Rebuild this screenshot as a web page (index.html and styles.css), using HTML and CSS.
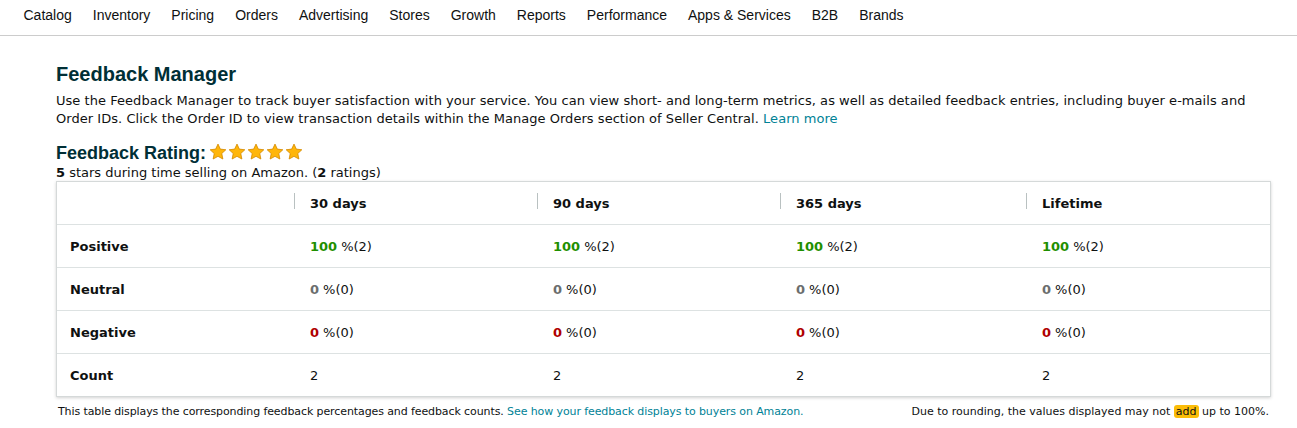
FILE: index.html
```html
<!DOCTYPE html>
<html lang="en">
<head>
<meta charset="utf-8">
<title>Feedback Manager</title>
<link rel="stylesheet" href="styles.css">
</head>
<body>
<nav class="topnav">
  <a>Catalog</a><a>Inventory</a><a>Pricing</a><a>Orders</a><a>Advertising</a><a>Stores</a><a>Growth</a><a>Reports</a><a>Performance</a><a>Apps &amp; Services</a><a>B2B</a><a>Brands</a>
</nav>
<main class="content">
  <h1 class="title">Feedback Manager</h1>
  <p class="intro">Use the Feedback Manager to track buyer satisfaction with your service. You can view short- and long-term metrics, as well as detailed feedback entries, including buyer e-mails and Order IDs. Click the Order ID to view transaction details within the Manage Orders section of Seller Central. <a class="link">Learn more</a></p>
  <div class="rating">
    <h2 class="rating-title">Feedback Rating:</h2>
    <span class="stars">
      <svg class="star" viewBox="0 0 20 20"><path d="M10 1.2l2.6 5.6 6.1.7-4.5 4.2 1.2 6.1L10 14.8l-5.4 3 1.2-6.1L1.3 7.5l6.1-.7z"/></svg>
      <svg class="star" viewBox="0 0 20 20"><path d="M10 1.2l2.6 5.6 6.1.7-4.5 4.2 1.2 6.1L10 14.8l-5.4 3 1.2-6.1L1.3 7.5l6.1-.7z"/></svg>
      <svg class="star" viewBox="0 0 20 20"><path d="M10 1.2l2.6 5.6 6.1.7-4.5 4.2 1.2 6.1L10 14.8l-5.4 3 1.2-6.1L1.3 7.5l6.1-.7z"/></svg>
      <svg class="star" viewBox="0 0 20 20"><path d="M10 1.2l2.6 5.6 6.1.7-4.5 4.2 1.2 6.1L10 14.8l-5.4 3 1.2-6.1L1.3 7.5l6.1-.7z"/></svg>
      <svg class="star" viewBox="0 0 20 20"><path d="M10 1.2l2.6 5.6 6.1.7-4.5 4.2 1.2 6.1L10 14.8l-5.4 3 1.2-6.1L1.3 7.5l6.1-.7z"/></svg>
    </span>
  </div>
  <p class="summary"><b>5</b> stars during time selling on Amazon. (<b>2</b> ratings)</p>
  <div class="table">
    <div class="row head">
      <div class="cell label"></div>
      <div class="cell"><span class="sep"></span>30 days</div>
      <div class="cell"><span class="sep"></span>90 days</div>
      <div class="cell"><span class="sep"></span>365 days</div>
      <div class="cell"><span class="sep"></span>Lifetime</div>
    </div>
    <div class="row">
      <div class="cell label">Positive</div>
      <div class="cell"><b class="pos">100</b> %(2)</div>
      <div class="cell"><b class="pos">100</b> %(2)</div>
      <div class="cell"><b class="pos">100</b> %(2)</div>
      <div class="cell"><b class="pos">100</b> %(2)</div>
    </div>
    <div class="row">
      <div class="cell label">Neutral</div>
      <div class="cell"><b class="neu">0</b> %(0)</div>
      <div class="cell"><b class="neu">0</b> %(0)</div>
      <div class="cell"><b class="neu">0</b> %(0)</div>
      <div class="cell"><b class="neu">0</b> %(0)</div>
    </div>
    <div class="row">
      <div class="cell label">Negative</div>
      <div class="cell"><b class="neg">0</b> %(0)</div>
      <div class="cell"><b class="neg">0</b> %(0)</div>
      <div class="cell"><b class="neg">0</b> %(0)</div>
      <div class="cell"><b class="neg">0</b> %(0)</div>
    </div>
    <div class="row">
      <div class="cell label">Count</div>
      <div class="cell">2</div>
      <div class="cell">2</div>
      <div class="cell">2</div>
      <div class="cell">2</div>
    </div>
  </div>
  <div class="notes">
    <span class="note-left">This table displays the corresponding feedback percentages and feedback counts. <a class="link">See how your feedback displays to buyers on Amazon.</a></span>
    <span>Due to rounding, the values displayed may not <mark class="hl">add</mark> up to 100%.</span>
  </div>
</main>
</body>
</html>
```

FILE: styles.css
```css
html, body {
  margin: 0;
  padding: 0;
  background: #fff;
}
body {
  font-family: "DejaVu Sans", Verdana, sans-serif;
  color: #0f1111;
}
.topnav {
  display: flex;
  height: 36px;
  padding: 6px 0 0 13px;
  box-sizing: border-box;
  border-bottom: 1px solid #cccccc;
  font-family: "Liberation Sans", Arial, sans-serif;
  font-size: 14px;
  line-height: 18px;
}
.topnav a {
  padding: 0 10.5px;
  color: #0f1111;
}
.content {
  padding: 0 26px 0 56px;
}
.title {
  margin: 26px 0 0;
  font-family: "Liberation Sans", Arial, sans-serif;
  font-size: 20px;
  line-height: 24px;
  font-weight: bold;
  color: #002f36;
}
.intro {
  margin: 6px 0 0;
  font-size: 13px;
  line-height: 18px;
  letter-spacing: 0.04px;
  color: #0f1111;
}
.link {
  color: #008296;
}
.rating {
  display: flex;
  align-items: center;
  margin-top: 15px;
  height: 20px;
}
.rating-title {
  margin: 0;
  font-family: "Liberation Sans", Arial, sans-serif;
  font-size: 18px;
  font-weight: bold;
  line-height: 20px;
  color: #002f36;
}
.stars {
  display: flex;
  gap: 1px;
  margin-left: 3px;
  margin-top: -3px;
}
.star {
  width: 18px;
  height: 18px;
  fill: #ffb60a;
  stroke: #d48a00;
  stroke-width: 0.9;
  stroke-linejoin: round;
}
.summary {
  margin: 1px 0 0;
  font-size: 13px;
  line-height: 17px;
}
.table {
  border: 1px solid #d5d9d9;
  box-shadow: 0 1px 3px rgba(0, 0, 0, 0.18);
  font-size: 13px;
}
.row {
  display: grid;
  grid-template-columns: 237px 243px 243px 246px 1fr;
  height: 43px;
  align-items: center;
  border-top: 1px solid #dde2e2;
  box-sizing: border-box;
}
.row.head {
  border-top: 0;
  height: 42px;
  font-weight: bold;
}
.cell {
  padding-left: 16px;
  display: flex;
  align-items: center;
  position: relative;
}
.cell.label {
  padding-left: 13px;
  font-weight: bold;
}
.sep {
  position: absolute;
  left: 0;
  top: -3px;
  width: 1px;
  height: 16px;
  background: #b9c1c1;
}
.cell b {
  margin-right: 4px;
}
.pos { color: #1f8f00; }
.neu { color: #6b6e6e; }
.neg { color: #b00000; }
.notes {
  display: flex;
  justify-content: space-between;
  margin-top: 8px;
  padding: 0 2px;
  font-size: 11px;
  line-height: 14px;
}
.note-left {
  letter-spacing: -0.1px;
}
.hl {
  background: #fbbd08;
  color: #0f1111;
  border-radius: 3px;
  padding: 0 2px;
}
```
